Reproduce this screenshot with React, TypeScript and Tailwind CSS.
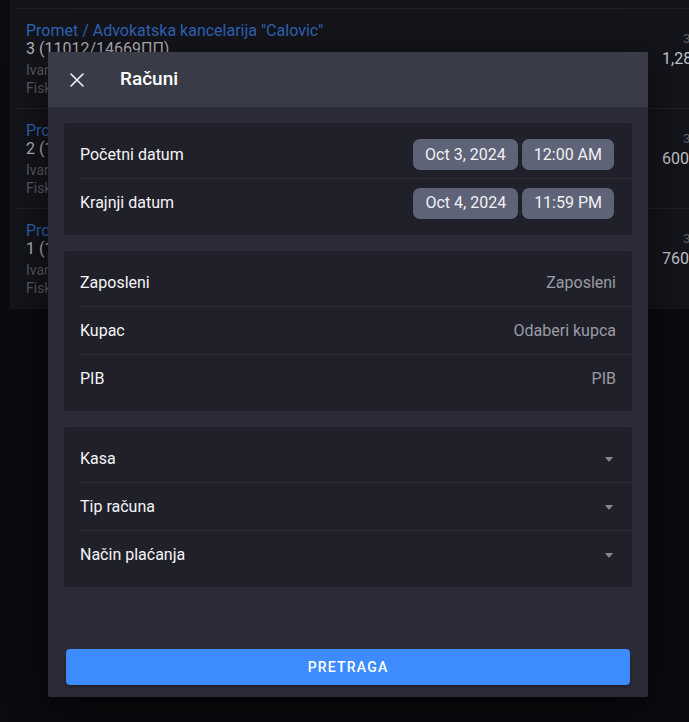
import React from 'react';

type Receipt = {
  title: string;
  number: string;
  cashier: string;
  kind: string;
  date: string;
  total: string;
};

const receipts: Receipt[] = [
  {
    title: 'Promet / Advokatska kancelarija "Calovic"',
    number: '3 (11012/14669ПП)',
    cashier: 'Ivan Calović',
    kind: 'Fiskalni račun',
    date: '3. okt 2024.',
    total: '1,280.00',
  },
  {
    title: 'Promet / Advokatska kancelarija "Calovic"',
    number: '2 (11012/14668ПП)',
    cashier: 'Ivan Calović',
    kind: 'Fiskalni račun',
    date: '3. okt 2024.',
    total: '600.00',
  },
  {
    title: 'Promet / Advokatska kancelarija "Calovic"',
    number: '1 (11012/14667ПП)',
    cashier: 'Ivan Calović',
    kind: 'Fiskalni račun',
    date: '3. okt 2024.',
    total: '760.00',
  },
];

const ReceiptRow = ({ item }: { item: Receipt }) => (
  <li className="flex h-[100px] border-t border-[#1f1f27] pl-[10px] pt-[13px]">
    <div className="flex grow flex-col">
      <span className="text-[16px] leading-[18px] text-[#2f63b4]">{item.title}</span>
      <span className="text-[16px] leading-[18px] text-[#b4b4bb]">{item.number}</span>
      <span className="mt-[3px] text-[14px] leading-[18px] text-[#5c5c66]">{item.cashier}</span>
      <span className="text-[14px] leading-[18px] text-[#5c5c66]">{item.kind}</span>
    </div>
    <div className="flex w-[108px] shrink-0 flex-col items-start pt-[8px]">
      <span className="pl-[21px] text-[13px] leading-[18px] text-[#5c5c66]">{item.date}</span>
      <span className="text-[16px] leading-[22px] text-[#c4c4cc]">{item.total}</span>
    </div>
  </li>
);

const DateChip = ({ children }: { children: React.ReactNode }) => (
  <span className="flex h-[31px] items-center rounded-[7px] bg-[#5f6377] px-3 text-[16px] text-[#f1f1f4]">
    {children}
  </span>
);

const Row = ({
  label,
  children,
  last,
  wide,
}: {
  label: string;
  children?: React.ReactNode;
  last?: boolean;
  wide?: boolean;
}) => (
  <div
    className={`ml-4 flex h-[48px] items-center ${wide ? 'pr-[18px]' : 'pr-4'} ${last ? '' : 'border-b border-[#2f2f3a]'}`}
  >
    <span className="grow text-[16px] text-[#f4f4f6]">{label}</span>
    {children}
  </div>
);

const Caret = () => (
  <svg width="12" height="12" viewBox="0 0 12 12" className="mr-[1px]">
    <path d="M1.8 4 L10.2 4 L6 8.8 Z" fill="#8a8a94" />
  </svg>
);

const Section = ({ children }: { children: React.ReactNode }) => (
  <div className="rounded-[3px] bg-[#20202a] py-2">{children}</div>
);

const SearchModal = () => (
  <div className="absolute left-[48px] top-[52px] flex h-[645px] w-[600px] flex-col rounded-[2px] bg-[#2c2c38] shadow-[0_10px_40px_rgba(0,0,0,0.6)]">
    <header className="flex h-[55px] items-center bg-[#393b46] pl-[20px]">
      <svg width="16" height="16" viewBox="0 0 16 16" className="ml-[1px]">
        <path d="M2 2 L14 14 M14 2 L2 14" stroke="#f2f2f4" strokeWidth="1.6" strokeLinecap="round" />
      </svg>
      <h2 className="ml-[35px] text-[19px] font-medium text-white">Računi</h2>
    </header>
    <div className="flex grow flex-col gap-4 px-4 pt-4">
      <Section>
        <Row label="Početni datum" wide>
          <div className="flex gap-1">
            <DateChip>Oct 3, 2024</DateChip>
            <DateChip>12:00 AM</DateChip>
          </div>
        </Row>
        <Row label="Krajnji datum" wide last>
          <div className="flex gap-1">
            <DateChip>Oct 4, 2024</DateChip>
            <DateChip>11:59 PM</DateChip>
          </div>
        </Row>
      </Section>
      <Section>
        <Row label="Zaposleni">
          <span className="text-[16px] text-[#9b9ba4]">Zaposleni</span>
        </Row>
        <Row label="Kupac">
          <span className="text-[16px] text-[#9b9ba4]">Odaberi kupca</span>
        </Row>
        <Row label="PIB" last>
          <span className="text-[16px] text-[#9b9ba4]">PIB</span>
        </Row>
      </Section>
      <Section>
        <Row label="Kasa">
          <Caret />
        </Row>
        <Row label="Tip računa">
          <Caret />
        </Row>
        <Row label="Način plaćanja" last>
          <Caret />
        </Row>
      </Section>
    </div>
    <div className="px-[18px] pb-3">
      <button
        type="button"
        className="h-[36px] w-full rounded-[4px] bg-[#3d8bff] text-[14px] font-medium tracking-[1.2px] text-white shadow-[0_2px_3px_rgba(0,0,0,0.35)]"
      >
        PRETRAGA
      </button>
    </div>
  </div>
);

export default function App() {
  return (
    <div
      className="relative h-[722px] w-[689px] overflow-hidden bg-[#0b0b10]"
      style={{ fontFamily: 'Roboto, "Noto Sans", sans-serif' }}
    >
      <div className="ml-[10px] h-[309px] w-[760px] bg-[#14141b] pl-[6px]">
        <ul className="pt-2">
          {receipts.map((item, i) => (
            <ReceiptRow key={i} item={item} />
          ))}
        </ul>
      </div>
      <SearchModal />
    </div>
  );
}
